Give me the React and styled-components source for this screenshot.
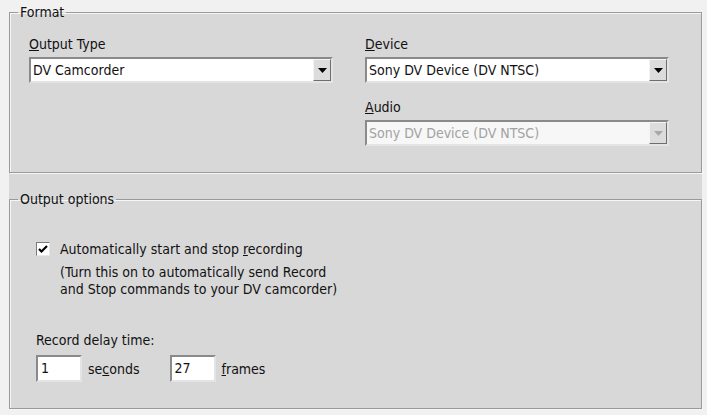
import React from 'react'
import styled, { createGlobalStyle } from 'styled-components';

const GlobalStyle = createGlobalStyle`
    html, body {
        margin: 0;
        padding: 0;
        background: #f1f1f1;
    }
    body {
        font-family: "DejaVu Sans Condensed", "DejaVu Sans", sans-serif;
        font-size: 14px;
        color: #111;
    }
`;

function Combo({ value, disabled }) {
    return (
        <ComboBox disabled={disabled}>
            <ComboText disabled={disabled}>{value}</ComboText>
            <DropButton>
                <svg width="9" height="5" viewBox="0 0 9 5">
                    <path d="M0 0 H9 L4.5 5 Z" fill={disabled ? '#a8a8a8' : '#000'} />
                </svg>
            </DropButton>
        </ComboBox>
    )
}

function App() {
    return (
        <Page>
            <GlobalStyle />
            <Sheet>
                <GroupBox first>
                    <Caption>Format</Caption>
                    <FormatGrid>
                        <Field>
                            <Label><u>O</u>utput Type</Label>
                            <Combo value="DV Camcorder" />
                        </Field>
                        <Field>
                            <Label><u>D</u>evice</Label>
                            <Combo value="Sony DV Device (DV NTSC)" />
                        </Field>
                        <Field />
                        <Field>
                            <Label><u>A</u>udio</Label>
                            <Combo value="Sony DV Device (DV NTSC)" disabled />
                        </Field>
                    </FormatGrid>
                </GroupBox>
                <GroupBox>
                    <Caption>Output options</Caption>
                    <Options>
                        <CheckRow>
                            <CheckBox>
                                <svg width="10" height="9" viewBox="0 0 10 9">
                                    <path d="M1 4 L3.5 6.5 L9 1" stroke="#000" strokeWidth="2.2" fill="none" />
                                </svg>
                            </CheckBox>
                            <div>
                                <Line>Automatically start and stop <u>r</u>ecording</Line>
                                <Hint>
                                    <HintLine>(Turn this on to automatically send Record</HintLine>
                                    <HintLine>and Stop commands to your DV camcorder)</HintLine>
                                </Hint>
                            </div>
                        </CheckRow>
                        <Delay>
                            <Line>Record delay time:</Line>
                            <DelayRow>
                                <NumberBox>1</NumberBox>
                                <Unit>se<u>c</u>onds</Unit>
                                <NumberBox>27</NumberBox>
                                <Unit><u>f</u>rames</Unit>
                            </DelayRow>
                        </Delay>
                    </Options>
                </GroupBox>
            </Sheet>
        </Page>
    )
}

const Page = styled.div`
    width: 707px;
    height: 415px;
    box-sizing: border-box;
    padding: 12px 5px 0 9px;
    overflow: hidden;
`;

const Sheet = styled.div`
    background: #d8d8d8;
    display: flex;
    flex-direction: column;
    gap: 18px;
`;

const GroupBox = styled.fieldset`
    margin: ${p => p.first ? '-8px' : '0'} 0 0 0;
    padding: 0;
    min-width: 0;
    background: #d8d8d8;
    border: 1px solid #9a9a9a;
    box-shadow: inset 1px 1px 0 #f6f6f6, 1px 1px 0 #f6f6f6;
    height: ${p => p.first ? '169px' : '218px'};
    box-sizing: border-box;
`;

const Caption = styled.legend`
    margin-left: 8px;
    padding: 0 2px;
    line-height: 16px;
`;

const FormatGrid = styled.div`
    display: grid;
    grid-template-columns: 304px 304px;
    column-gap: 32px;
    row-gap: 16px;
    padding: 16px 0 0 19px;
`;

const Field = styled.div`
    display: flex;
    flex-direction: column;
    gap: 5px;
`;

const Label = styled.div`
    line-height: 16px;
`;

const ComboBox = styled.div`
    height: 26px;
    box-sizing: border-box;
    display: flex;
    align-items: stretch;
    background: ${p => p.disabled ? '#f7f7f7' : '#fff'};
    border: 2px solid;
    border-color: #8a8a8a #e4e4e4 #e4e4e4 #8a8a8a;
`;

const ComboText = styled.div`
    flex: 1;
    padding-left: 2px;
    line-height: 22px;
    color: ${p => p.disabled ? '#a2a2a2' : '#111'};
`;

const DropButton = styled.div`
    width: 18px;
    box-sizing: border-box;
    display: flex;
    align-items: center;
    justify-content: center;
    background: #dcdcdc;
    border: 1px solid;
    border-color: #f4f4f4 #6e6e6e #6e6e6e #f4f4f4;
`;

const Options = styled.div`
    padding: 32px 0 0 26px;
    display: flex;
    flex-direction: column;
    gap: 32px;
`;

const CheckRow = styled.div`
    display: flex;
    gap: 10px;
    align-items: flex-start;
`;

const CheckBox = styled.div`
    width: 14px;
    height: 14px;
    margin-top: 3px;
    box-sizing: border-box;
    background: #fff;
    border: 1px solid;
    border-color: #7a7a7a #e8e8e8 #e8e8e8 #7a7a7a;
    display: flex;
    align-items: center;
    justify-content: center;
`;

const Line = styled.div`
    line-height: 20px;
    white-space: nowrap;
`;

const Hint = styled.div`
    margin-top: 5px;
`;

const HintLine = styled.div`
    line-height: 17px;
    white-space: nowrap;
`;

const Delay = styled.div`
    display: flex;
    flex-direction: column;
    gap: 5px;
`;

const DelayRow = styled.div`
    display: flex;
    align-items: center;
`;

const NumberBox = styled.div`
    width: 46px;
    height: 27px;
    box-sizing: border-box;
    background: #fff;
    border: 2px solid;
    border-color: #8a8a8a #e4e4e4 #e4e4e4 #8a8a8a;
    padding-left: 3px;
    line-height: 23px;
`;

const Unit = styled.div`
    margin: 0 30px 0 6px;
`;

export default App;
